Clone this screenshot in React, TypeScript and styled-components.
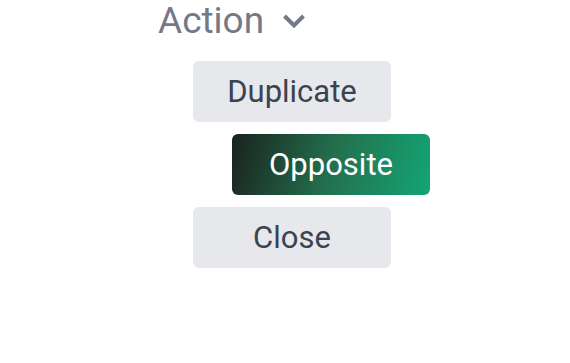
import styled, { createGlobalStyle } from 'styled-components';

const GlobalStyle = createGlobalStyle`
  html, body {
    margin: 0;
    padding: 0;
    background: #ffffff;
  }
  body {
    font-family: Roboto, "Liberation Sans", Arial, sans-serif;
  }
`;

const Page = styled.div`
  display: flex;
  flex-direction: column;
  align-items: flex-start;
  padding-left: 158px;
`;

const Title = styled.button`
  display: flex;
  align-items: center;
  gap: 18px;
  padding: 0;
  border: none;
  background: none;
  font-family: inherit;
  font-size: 37px;
  line-height: 42px;
  color: #737987;
  cursor: pointer;
`;

const Menu = styled.div`
  display: flex;
  flex-direction: column;
  align-items: flex-start;
  gap: 12px;
  margin-top: 19px;
  padding-left: 35px;
`;

const Item = styled.button<{ $active?: boolean }>`
  width: 198px;
  height: 61px;
  border: none;
  border-radius: 6px;
  font-family: inherit;
  font-size: 31px;
  cursor: pointer;
  margin-left: ${(p) => (p.$active ? '39px' : '0')};
  color: ${(p) => (p.$active ? '#ffffff' : '#3b4250')};
  background: ${(p) =>
    p.$active ? 'linear-gradient(105deg, #1a221e 0%, #23704d 50%, #13a575 100%)' : '#e6e8ec'};
`;

const Chevron = () => (
  <svg width="24" height="18" viewBox="0 0 24 18" fill="none">
    <polyline points="2.5,4 12,13.5 21.5,4" stroke="#737987" strokeWidth="4" />
  </svg>
);

export default function App() {
  return (
    <>
      <GlobalStyle />
      <Page>
        <Title>
          Action
          <Chevron />
        </Title>
        <Menu>
          <Item>Duplicate</Item>
          <Item $active>Opposite</Item>
          <Item>Close</Item>
        </Menu>
      </Page>
    </>
  );
}
